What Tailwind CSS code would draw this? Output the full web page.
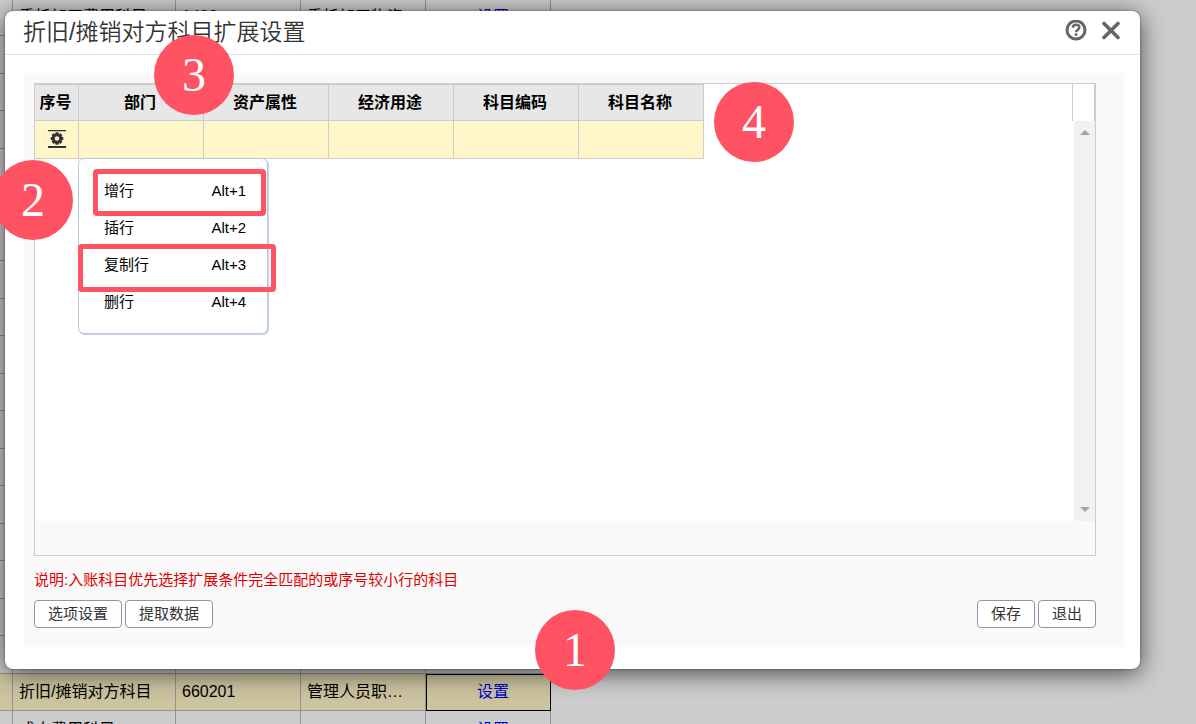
<!DOCTYPE html>
<html lang="zh-CN">
<head>
  <meta charset="UTF-8">
  <title>折旧/摊销对方科目扩展设置</title>
  <script src="https://cdn.jsdelivr.net/npm/@tailwindcss/browser@4"></script>
</head>
<body class="relative h-screen overflow-hidden bg-white text-black font-['Liberation_Sans','Noto_Sans_CJK_SC',sans-serif]">

  <!-- Page behind the dialog -->
  <table class="-mt-[2px] -ml-px w-[552px] table-fixed border-collapse text-base leading-5">
    <colgroup>
      <col class="w-[13px]">
      <col class="w-[163px]">
      <col class="w-[125px]">
      <col class="w-[125px]">
      <col class="w-[125px]">
    </colgroup>
    <tbody id="accounts"></tbody>
  </table>

  <!-- Dialog -->
  <div class="absolute inset-0 flex bg-black/20 pt-[11px] pr-14 pb-[55px] pl-[5px]">
    <div role="dialog" aria-labelledby="title" class="flex flex-1 flex-col rounded-lg bg-white shadow-[0_4px_24px_rgba(0,0,0,0.65),0_0_2px_rgba(0,0,0,0.5)]">
      <header class="flex h-11 items-center justify-between border-b border-[#e0e0e0] pr-[19px] pl-[18px]">
        <h1 id="title" class="pb-0.5 text-[23px] leading-8 font-[350] text-[#333]">折旧/摊销对方科目扩展设置</h1>
        <div class="flex items-center gap-[14px] pb-1 text-[#666]">
          <button aria-label="帮助">
            <svg class="size-[22px]" viewBox="0 0 22 22" fill="none" stroke="currentColor">
              <circle cx="11" cy="10" r="9" stroke-width="3" />
              <path d="M7.800 7.800C7.800 5.800 9.200 4.800 11 4.800s3.300 1 3.300 2.700c0 2.200-3.200 2.300-3.200 4.800" stroke-width="2.600" />
              <path d="M11.100 13.400v2.400" stroke-width="2.800" />
            </svg>
          </button>
          <button aria-label="关闭">
            <svg class="size-5" viewBox="0 0 20 20" fill="none" stroke="currentColor" stroke-width="3.600" stroke-linecap="round">
              <path d="M3 2.500l14 14M17 2.500L3 16.500" />
            </svg>
          </button>
        </div>
      </header>

      <main class="mt-[18px] mr-4 mb-[22px] ml-[19px] flex flex-1 flex-col bg-[#f9f9f9] pt-[10px] pr-7 pb-[19px] pl-[10px]">
        <!-- Grid -->
        <div class="relative flex flex-1 flex-col border border-[#ccc]">
          <div class="flex flex-1 bg-white">
            <div class="flex-1">
              <table class="-ml-px w-[670px] table-fixed border-collapse text-base">
                <colgroup>
                  <col class="w-11">
                  <col span="5" class="w-[125px]">
                </colgroup>
                <thead>
                  <tr class="h-9 bg-[#e7e7e7] *:border *:border-[#ccc] *:p-0 *:pr-0.5 *:font-bold">
                    <th>序号</th>
                    <th>部门</th>
                    <th>资产属性</th>
                    <th>经济用途</th>
                    <th>科目编码</th>
                    <th>科目名称</th>
                  </tr>
                </thead>
                <tbody>
                  <tr class="h-[38px] bg-[#fff6c9] *:border *:border-[#ccc] *:p-0">
                    <td>
                      <button aria-label="行操作" class="mx-auto block pb-0.5 text-[#333]">
                        <svg class="h-5 w-[18px]" viewBox="0 0 18 20">
                          <path d="M0 1h18v1.200H0zM0 17h18v2H0z" fill="currentColor" />
                          <circle cx="9" cy="9.500" r="3.700" fill="none" stroke="currentColor" stroke-width="3" />
                          <path d="M9 3.200v2M9 13.800v2M2.700 9.500h2M13.300 9.500h2M4.600 5.100l1.400 1.400M12 12.500l1.400 1.400M13.400 5.100l-1.400 1.400M6 12.500l-1.400 1.400" stroke="currentColor" stroke-width="3" />
                        </svg>
                      </button>
                    </td>
                    <td></td>
                    <td></td>
                    <td></td>
                    <td></td>
                    <td></td>
                  </tr>
                </tbody>
              </table>
            </div>
            <!-- Scrollbar -->
            <div class="flex w-[23px] flex-col">
              <div class="h-[37px] border-r border-l border-[#ccc]"></div>
              <div class="ml-0.5 flex flex-1 flex-col items-center justify-between bg-[#f1f1f1] py-[9px] text-[#a3a3a3]">
                <svg class="h-[5px] w-[10px]" viewBox="0 0 10 5" fill="currentColor"><path d="M0 5L5 0l5 5z" /></svg>
                <svg class="h-[5px] w-[10px]" viewBox="0 0 10 5" fill="currentColor"><path d="M0 0l5 5 5-5z" /></svg>
              </div>
            </div>
          </div>
          <div class="h-[34px]"></div>

          <!-- Row menu -->
          <div role="menu" class="absolute top-[74px] left-[43px] w-[190px] rounded-md border border-[#b9c6dd] bg-white pt-[14px] pb-3 text-[15px] shadow-[1px_1px_1px_rgba(120,140,180,0.4)]">
            <button role="menuitem" class="flex h-[37px] w-full items-center justify-between pr-[21px] pl-[25px]"><span>增行</span><span>Alt+1</span></button>
            <button role="menuitem" class="flex h-[37px] w-full items-center justify-between pr-[21px] pl-[25px]"><span>插行</span><span>Alt+2</span></button>
            <button role="menuitem" class="flex h-[37px] w-full items-center justify-between pr-[21px] pl-[25px]"><span>复制行</span><span>Alt+3</span></button>
            <button role="menuitem" class="flex h-[37px] w-full items-center justify-between pr-[21px] pl-[25px]"><span>删行</span><span>Alt+4</span></button>
          </div>
        </div>

        <p class="mt-[14px] text-[15px] leading-5 text-[#e00000]">说明:入账科目优先选择扩展条件完全匹配的或序号较小行的科目</p>

        <div class="mt-[10px] flex justify-between text-[15px] text-[#333]">
          <div class="flex gap-[3px]">
            <button class="h-7 rounded border border-[#8e97a8] bg-white px-[13px] leading-5">选项设置</button>
            <button class="h-7 rounded border border-[#8e97a8] bg-white px-[13px] leading-5">提取数据</button>
          </div>
          <div class="flex gap-[3px]">
            <button class="h-7 rounded border border-[#8e97a8] bg-white px-[13px] leading-5">保存</button>
            <button class="h-7 rounded border border-[#8e97a8] bg-white px-[13px] leading-5">退出</button>
          </div>
        </div>
      </main>
    </div>
  </div>

  <!-- Step markers -->
  <div class="absolute top-[169px] left-[93px] h-[47px] w-[173px] rounded border-[5px] border-[#ff5263]"></div>
  <div class="absolute top-[244px] left-[78px] h-12 w-[198px] rounded border-[5px] border-[#ff5263]"></div>
  <div class="absolute top-[610px] left-[535px] flex size-20 items-center justify-center rounded-full bg-[#ff5263] font-['Liberation_Serif',serif] text-5xl text-white">1</div>
  <div class="absolute top-[160px] -left-[7px] flex size-20 items-center justify-center rounded-full bg-[#ff5263] font-['Liberation_Serif',serif] text-5xl text-white">2</div>
  <div class="absolute top-[35px] left-[154px] flex size-20 items-center justify-center rounded-full bg-[#ff5263] font-['Liberation_Serif',serif] text-5xl text-white">3</div>
  <div class="absolute top-[82px] left-[714px] flex size-20 items-center justify-center rounded-full bg-[#ff5263] font-['Liberation_Serif',serif] text-5xl text-white">4</div>

  <script>
    const rows = Array.from({ length: 18 }, () => ['', '', '']);
    rows[0] = ['委托加工费用科目', '1408', '委托加工物资'];
    rows.push(['折旧/摊销对方科目', '660201', '管理人员职工薪酬']);
    rows.push(['成本费用科目', '', '']);

    const cell = 'truncate border border-[#b8b8b8] px-1.5 py-0';
    document.getElementById('accounts').innerHTML = rows.map(([name, code, account]) => {
      const active = code === '660201';
      return `
        <tr class="h-[37px] even:h-[38px] ${active ? 'bg-[#fff6c9]' : 'bg-white'}">
          <td class="${cell}"></td>
          <td class="${cell}">${name}</td>
          <td class="${cell}">${code}</td>
          <td class="${cell}">${account}</td>
          <td class="${cell} pl-4 text-center ${active ? 'outline -outline-offset-1 outline-black' : ''}">
            <a href="#" class="text-[#0000ff]">设置</a>
          </td>
        </tr>`;
    }).join('');
  </script>
</body>
</html>
